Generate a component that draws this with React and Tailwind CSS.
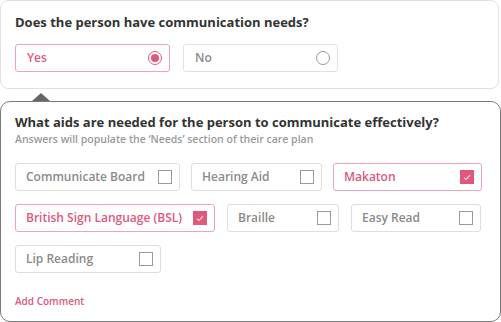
import React from "react";

function Radio({ checked }) {
  return checked ? (
    <span className="flex h-[14px] w-[14px] items-center justify-center rounded-full border-[1.5px] border-[#e0587b]">
      <span className="h-[8px] w-[8px] rounded-full bg-[#e0587b]" />
    </span>
  ) : (
    <span className="h-[14px] w-[14px] rounded-full border border-[#999]" />
  );
}

function Box({ checked }) {
  return checked ? (
    <span className="flex h-[14px] w-[14px] items-center justify-center bg-[#e0587b]">
      <svg width="8" height="7" viewBox="0 0 8 7" fill="none">
        <path d="M1 3.6 L3 5.5 L7 1.2" stroke="#fbe3ea" strokeWidth="1.1" />
      </svg>
    </span>
  ) : (
    <span className="h-[14px] w-[14px] border border-[#9a9a9a]" />
  );
}

function Chip({ label, checked, w }) {
  return (
    <div
      className={
        "flex h-[28px] shrink-0 items-center justify-between rounded-[3px] border pl-[10px] pr-[7px] " +
        (checked ? "border-[#eea3b6] text-[#e0587b]" : "border-[#dedede] text-[#8a8a8a]")
      }
      style={{ width: w }}
    >
      <span className="text-[12px] font-semibold leading-none">{label}</span>
      <Box checked={checked} />
    </div>
  );
}

export default function App() {
  return (
    <div
      className="h-[322px] w-[501px] bg-white"
      style={{ fontFamily: "'Open Sans', sans-serif" }}
    >
      <div className="w-[499px] rounded-[8px] border border-[#e2e2e2] px-[14px] pb-[16px] pt-[12px]">
        <div className="text-[13px] font-bold leading-[18px] text-[#333]">
          Does the person have communication needs?
        </div>
        <div className="mt-[13px] flex gap-[13px]">
          <div className="flex h-[28px] w-[155px] items-center justify-between rounded-[3px] border border-[#eea3b6] pl-[11px] pr-[7px]">
            <span className="text-[12px] font-semibold leading-none text-[#e0587b]">Yes</span>
            <Radio checked />
          </div>
          <div className="flex h-[28px] w-[155px] items-center justify-between rounded-[3px] border border-[#e2e2e2] pl-[11px] pr-[7px]">
            <span className="text-[12px] font-semibold leading-none text-[#8a8a8a]">No</span>
            <Radio />
          </div>
        </div>
      </div>
      <div className="ml-[32px] mt-[4px] h-0 w-0 border-b-[8px] border-l-[9px] border-r-[9px] border-b-[#666] border-l-transparent border-r-transparent" />
      <div className="h-[221px] w-[501px] rounded-[10px] border border-[#7a7a7a] px-[14px] pt-[11px]">
        <div className="text-[13px] font-bold leading-[18px] text-[#333]">
          What aids are needed for the person to communicate effectively?
        </div>
        <div className="mt-[1px] text-[10.5px] font-semibold leading-[15px] text-[#9a9a9a]">
          Answers will populate the ‘Needs’ section of their care plan
        </div>
        <div className="mt-[16px] flex flex-col gap-[13px]">
          <div className="flex gap-[11px]">
            <Chip label="Communicate Board" w={165} />
            <Chip label="Hearing Aid" w={131} />
            <Chip label="Makaton" w={149} checked />
          </div>
          <div className="flex gap-[12px]">
            <Chip label="British Sign Language (BSL)" w={200} checked />
            <Chip label="Braille" w={112} />
            <Chip label="Easy Read" w={130} />
          </div>
          <div className="flex">
            <Chip label="Lip Reading" w={146} />
          </div>
        </div>
        <div className="mt-[21px] text-[10px] font-semibold leading-[14px] text-[#e0587b]">
          Add Comment
        </div>
      </div>
    </div>
  );
}
